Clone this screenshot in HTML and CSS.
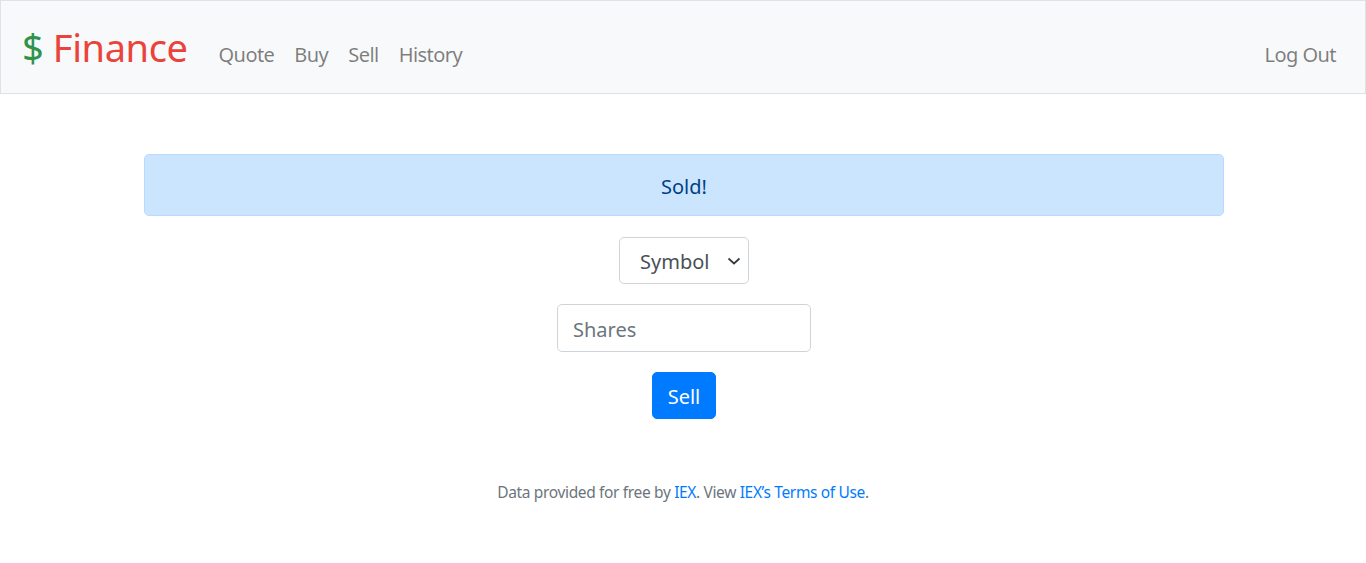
FILE: index.html
```html
<!DOCTYPE html>
<html lang="en">
<head>
<meta charset="utf-8">
<title>C$50 Finance: Sell</title>
<link rel="stylesheet" href="styles.css">
</head>
<body>
<nav class="navbar">
  <a class="brand" href="#"><span class="green">$</span> <span class="red">Finance</span></a>
  <ul class="nav-left">
    <li><a href="#">Quote</a></li>
    <li><a href="#">Buy</a></li>
    <li><a href="#">Sell</a></li>
    <li><a href="#">History</a></li>
  </ul>
  <ul class="nav-right">
    <li><a href="#">Log Out</a></li>
  </ul>
</nav>
<header class="flash">
  <div class="alert">Sold!</div>
</header>
<main class="main">
  <form class="sell-form">
    <div class="group">
      <select class="control select">
        <option>Symbol</option>
      </select>
    </div>
    <div class="group">
      <input class="control input" type="text" placeholder="Shares">
    </div>
    <button class="btn" type="button">Sell</button>
  </form>
</main>
<footer class="footer">
  Data provided for free by <a href="#">IEX</a>. View <a href="#">IEX’s Terms of Use</a>.
</footer>
</body>
</html>
```
FILE: styles.css
```css
* { box-sizing: border-box; }
html, body { margin: 0; padding: 0; }
body {
  font-family: "Noto Sans", "Open Sans", sans-serif;
  font-size: 20px;
  color: #212529;
  background: #fff;
}
a { text-decoration: none; }
ul { list-style: none; margin: 0; padding: 0; }

.navbar {
  display: flex;
  align-items: baseline;
  height: 94px;
  padding: 0 19px 0 21px;
  background: #f8f9fa;
  border: 1px solid #dee2e6;
}
.brand {
  font-size: 38px;
  line-height: 92px;
  margin-right: 21px;
  letter-spacing: -0.4px;
}
.green { color: #2e944b; }
.red { color: #ea433b; }
.nav-left, .nav-right { display: flex; }
.nav-right { margin-left: auto; }
.nav-left a, .nav-right a {
  display: block;
  padding: 0 10px;
  color: rgba(0,0,0,0.5);
  font-size: 20px;
  letter-spacing: -0.55px;
}

.flash {
  padding: 0 142px 0 144px;
  margin-top: 60px;
}
.alert {
  height: 62px;
  padding-top: 2px;
  display: flex;
  align-items: center;
  justify-content: center;
  background: #cce5ff;
  border: 1px solid #b8daff;
  border-radius: 5px;
  color: #004085;
  font-size: 20px;
}

.main {
  padding: 21px 0 0 2px;
  display: flex;
  justify-content: center;
}
.sell-form {
  display: flex;
  flex-direction: column;
  align-items: center;
}
.group { margin-bottom: 20px; }
.control {
  font-family: inherit;
  font-size: 20px;
  color: #495057;
  background: #fff;
  border: 1px solid #ced4da;
  border-radius: 5px;
}
.select {
  width: 130px;
  height: 47px;
  padding: 2px 38px 0 20px;
  appearance: none;
  -webkit-appearance: none;
  background-image: url("data:image/svg+xml,%3Csvg xmlns='http://www.w3.org/2000/svg' width='14' height='10' viewBox='0 0 14 10'%3E%3Cpath d='M1.5 2.5l5.5 5 5.5-5' fill='none' stroke='%23343a40' stroke-width='1.7'/%3E%3C/svg%3E");
  background-repeat: no-repeat;
  background-position: right 7px center;
  color: #495057;
}
.input {
  width: 254px;
  height: 48px;
  padding: 2px 15px 0;
}
.input::placeholder { color: #6c757d; }
.btn {
  font-family: inherit;
  font-size: 20px;
  color: #fff;
  background: #007bff;
  border: 1px solid #007bff;
  border-radius: 5px;
  width: 64px;
  height: 47px;
  padding: 2px 0 0;
}

.footer {
  margin-top: 62px;
  text-align: center;
  font-size: 15.5px;
  color: #6c757d;
  letter-spacing: -0.35px;
}
.footer a { color: #007bff; }
```
